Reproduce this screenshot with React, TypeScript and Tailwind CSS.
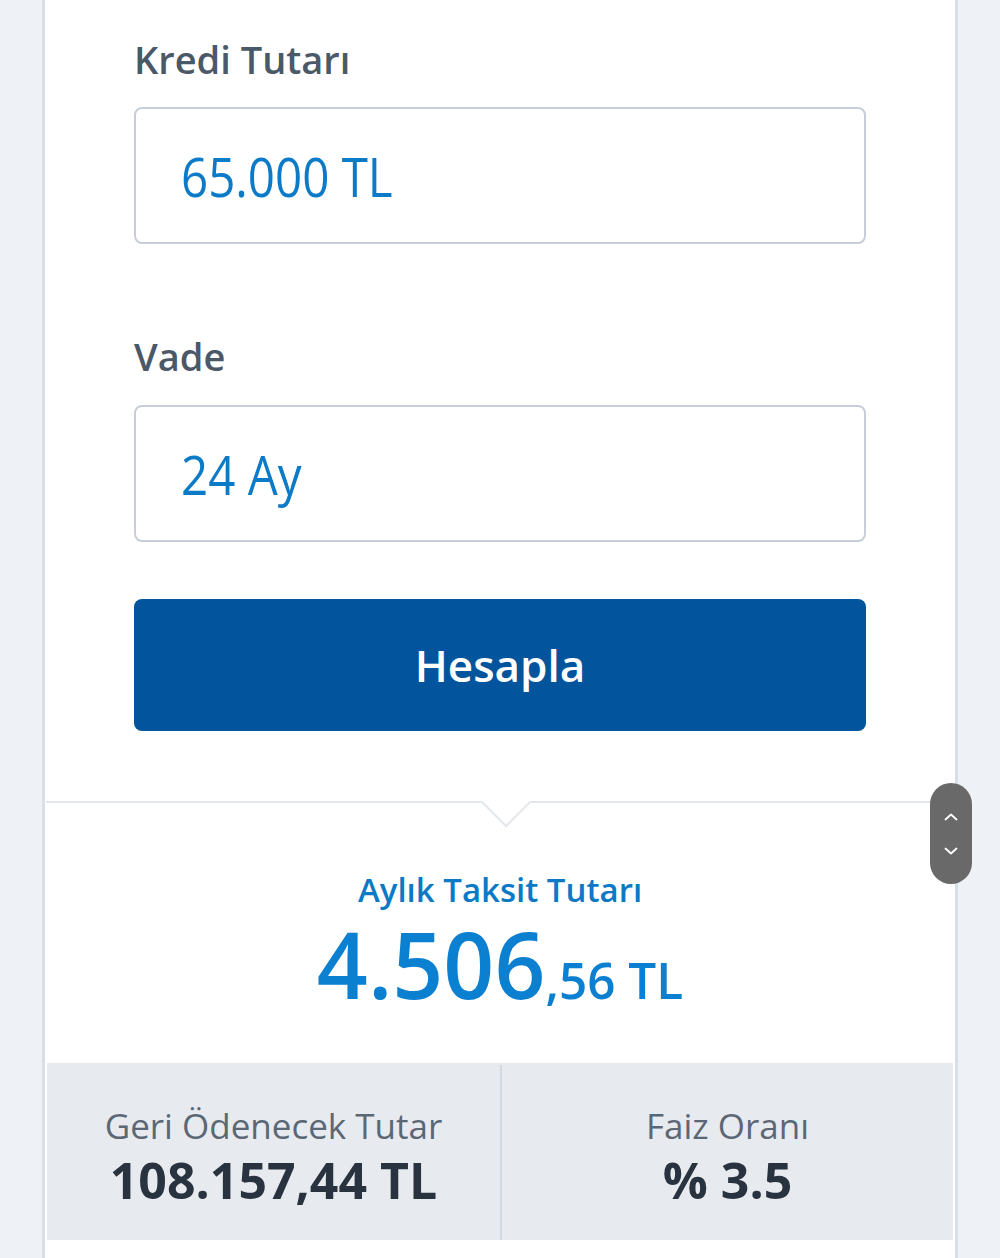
import React from "react";

function Chevron({ up }: { up?: boolean }) {
  return (
    <svg width="18" height="12" viewBox="0 0 18 12" fill="none">
      <path
        d={up ? "M3.5 8.5 L9 3.5 L14.5 8.5" : "M3.5 3.5 L9 8.5 L14.5 3.5"}
        stroke="white"
        strokeWidth="1.8"
        strokeLinecap="round"
        strokeLinejoin="round"
      />
    </svg>
  );
}

export default function App() {
  const font = { fontFamily: '"Open Sans", "Noto Sans", sans-serif' };
  return (
    <div className="relative min-h-[1258px] bg-[#eef2f6] flex justify-center" style={font}>
      <div className="w-[916px] border-x-[3px] border-[#d9dfe6] bg-white flex flex-col">
        <div className="px-[89px] flex flex-col">
          <div className="pt-[40px] text-[38px] leading-none font-semibold text-[#4a5867]">Kredi Tutarı</div>
          <div className="mt-[29px] h-[137px] border-2 border-[#c6cfd9] rounded-[8px] flex items-center pl-[45px]">
            <span className="inline-block origin-left scale-x-[0.88] text-[54px] leading-none text-[#0b7ac7]">65.000 TL</span>
          </div>
          <div className="mt-[93px] text-[38px] leading-none font-semibold text-[#4a5867]">Vade</div>
          <div className="mt-[30px] h-[137px] border-2 border-[#c6cfd9] rounded-[8px] flex items-center pl-[45px]">
            <span className="inline-block origin-left scale-x-[0.88] text-[54px] leading-none text-[#0b7ac7]">24 Ay</span>
          </div>
          <button className="mt-[57px] h-[132px] rounded-[8px] bg-[#02549d] text-white text-[44px] font-semibold flex items-center justify-center">
            Hesapla
          </button>
        </div>
        <div className="mt-[70px] mx-px relative border-t-2 border-[#e3e7ec] flex flex-col">
          <div className="absolute top-[-19px] left-[442px] w-[36px] h-[36px] rotate-45 bg-white border-r-2 border-b-2 border-[#e3e7ec]" />
          <div className="pt-[70px] text-center text-[33px] leading-none font-semibold text-[#0b79c5]">Aylık Taksit Tutarı</div>
          <div className="mt-[12px] flex items-baseline justify-center text-[#0b7fd0] font-semibold scale-x-[0.97]">
            <span className="inline-block text-[92px] leading-none">4.506</span>
            <span className="inline-block text-[51px] leading-none">,56 TL</span>
          </div>
          <div className="mt-[53px] mx-px h-[177px] bg-[#e7ebef] grid grid-cols-2">
            <div className="flex flex-col items-center pt-[45px]">
              <div className="text-[35px] leading-none text-[#5b6775]">Geri Ödenecek Tutar</div>
              <div className="mt-[12px] text-[50px] leading-none font-bold text-[#29333f]">108.157,44 TL</div>
            </div>
            <div className="flex flex-col items-center pt-[45px] border-l-2 border-[#d3d9e0] mt-[2px]">
              <div className="-mt-[2px] text-[35px] leading-none text-[#5b6775]">Faiz Oranı</div>
              <div className="mt-[12px] text-[50px] leading-none font-bold text-[#29333f]">% 3.5</div>
            </div>
          </div>
          <div className="h-[18px] bg-white" />
        </div>
      </div>
      <div className="absolute left-[930px] top-[783px] w-[42px] h-[101px] rounded-full bg-[#696969] flex flex-col items-center justify-center gap-[22px]">
        <Chevron up />
        <Chevron />
      </div>
    </div>
  );
}
